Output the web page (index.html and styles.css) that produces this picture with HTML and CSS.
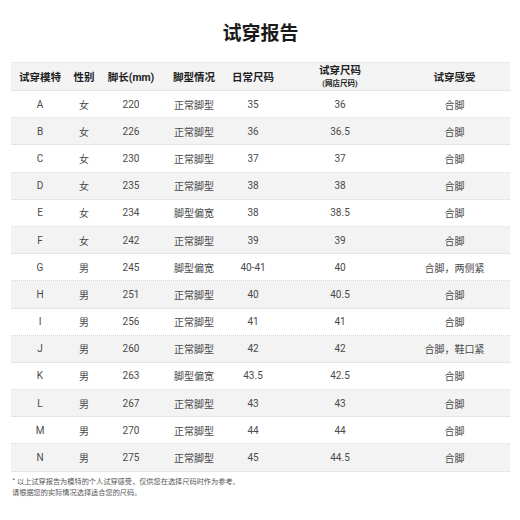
FILE: index.html
```html
<!DOCTYPE html>
<html lang="zh-CN">
<head>
<meta charset="utf-8">
<title>试穿报告</title>
<link rel="stylesheet" href="styles.css">
</head>
<body>
<div class="page">
  <h1 class="title">试穿报告</h1>
  <div class="table">
    <div class="row head">
      <div>试穿模特</div><div>性别</div><div>脚长(mm)</div><div>脚型情况</div><div>日常尺码</div>
      <div class="two"><span>试穿尺码</span><span class="sub">(网店尺码)</span></div><div>试穿感受</div>
    </div>
    <div class="row"><div>A</div><div>女</div><div>220</div><div>正常脚型</div><div>35</div><div>36</div><div>合脚</div></div>
    <div class="row alt"><div>B</div><div>女</div><div>226</div><div>正常脚型</div><div>36</div><div>36.5</div><div>合脚</div></div>
    <div class="row"><div>C</div><div>女</div><div>230</div><div>正常脚型</div><div>37</div><div>37</div><div>合脚</div></div>
    <div class="row alt"><div>D</div><div>女</div><div>235</div><div>正常脚型</div><div>38</div><div>38</div><div>合脚</div></div>
    <div class="row"><div>E</div><div>女</div><div>234</div><div>脚型偏宽</div><div>38</div><div>38.5</div><div>合脚</div></div>
    <div class="row alt"><div>F</div><div>女</div><div>242</div><div>正常脚型</div><div>39</div><div>39</div><div>合脚</div></div>
    <div class="row"><div>G</div><div>男</div><div>245</div><div>脚型偏宽</div><div>40-41</div><div>40</div><div>合脚，两侧紧</div></div>
    <div class="row alt"><div>H</div><div>男</div><div>251</div><div>正常脚型</div><div>40</div><div>40.5</div><div>合脚</div></div>
    <div class="row"><div>I</div><div>男</div><div>256</div><div>正常脚型</div><div>41</div><div>41</div><div>合脚</div></div>
    <div class="row alt"><div>J</div><div>男</div><div>260</div><div>正常脚型</div><div>42</div><div>42</div><div>合脚，鞋口紧</div></div>
    <div class="row"><div>K</div><div>男</div><div>263</div><div>脚型偏宽</div><div>43.5</div><div>42.5</div><div>合脚</div></div>
    <div class="row alt"><div>L</div><div>男</div><div>267</div><div>正常脚型</div><div>43</div><div>43</div><div>合脚</div></div>
    <div class="row"><div>M</div><div>男</div><div>270</div><div>正常脚型</div><div>44</div><div>44</div><div>合脚</div></div>
    <div class="row alt"><div>N</div><div>男</div><div>275</div><div>正常脚型</div><div>45</div><div>44.5</div><div>合脚</div></div>
  </div>
  <p class="note">* 以上试穿报告为模特的个人试穿感受，仅供您在选择尺码时作为参考。<br>请根据您的实际情况选择适合您的尺码。</p>
</div>
</body>
</html>
```
FILE: styles.css
```css
html, body {
  margin: 0;
  padding: 0;
  background: #ffffff;
}
body {
  font-family: Roboto, "Noto Sans CJK SC", sans-serif;
  color: #444;
}
.page {
  width: 520px;
  height: 520px;
  padding: 22px 10px 0 11px;
  box-sizing: border-box;
}
.title {
  margin: 0 0 20px;
  font-size: 19px;
  line-height: 20px;
  font-weight: 700;
  text-align: center;
  color: #1a1a1a;
  font-family: "Noto Sans CJK SC", sans-serif;
}
.table {
  display: flex;
  flex-direction: column;
}
.row {
  display: grid;
  grid-template-columns: 58px 30px 64px 62px 56px 118px 111px;
  height: 27.2px;
  box-sizing: border-box;
  border-bottom: 1px dotted #d6d6d6;
  font-size: 10px;
  color: #4a4a4a;
}
.row > div {
  display: flex;
  align-items: center;
  justify-content: center;
  white-space: nowrap;
}
.row.alt {
  background: #f3f3f3;
}
.row.head {
  height: 29px;
  background: #f3f3f3;
  border-top: 1px dotted #e2e2e2;
  color: #1e1e1e;
  font-weight: 700;
  font-size: 10.5px;
}
.row.head > .two {
  flex-direction: column;
  line-height: 14px;
}
.sub {
  font-size: 7.5px;
  line-height: 11px;
}
.note {
  margin: 4px 0 0 1px;
  font-size: 7.2px;
  line-height: 11px;
  color: #555;
  font-family: "Noto Sans CJK SC", sans-serif;
}
```
